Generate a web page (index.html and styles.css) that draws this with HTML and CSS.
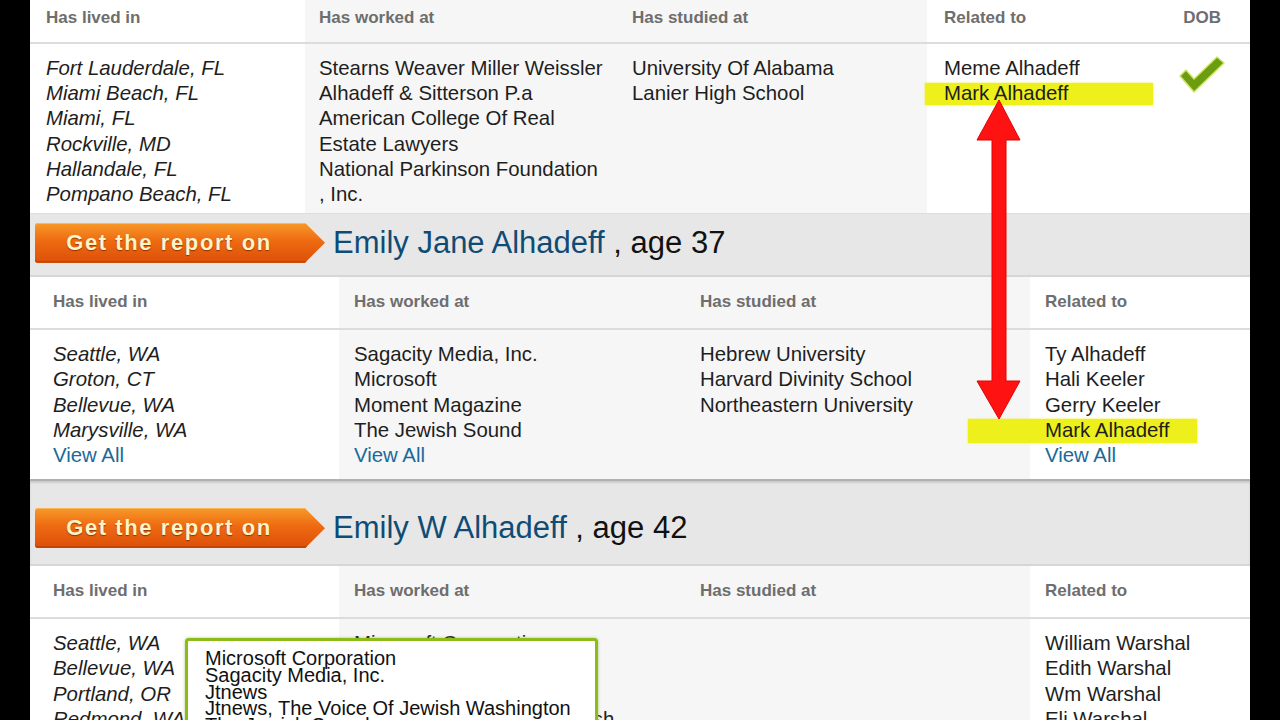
FILE: index.html
```html
<!DOCTYPE html>
<html>
    <head>
        <meta charset="utf-8">
        <title>Search results</title>
        <link rel="stylesheet" href="styles.css">
    </head>
    <body>
        <div class="page">
            <!-- first person, top cut off -->
            <div class="result">
                <div class="grid grid-top">
                    <div class="head lived">Has lived in</div>
                    <div class="head worked">Has worked at</div>
                    <div class="head studied">Has studied at</div>
                    <div class="head related">Related to</div>
                    <div class="head dob">DOB</div>
                    <div class="cell lived places">
                        <div>Fort Lauderdale, FL</div>
                        <div>Miami Beach, FL</div>
                        <div>Miami, FL</div>
                        <div>Rockville, MD</div>
                        <div>Hallandale, FL</div>
                        <div>Pompano Beach, FL</div>
                    </div>
                    <div class="cell worked">
                        <div>Stearns Weaver Miller Weissler</div>
                        <div>Alhadeff &amp; Sitterson P.a</div>
                        <div>American College Of Real<br>Estate Lawyers</div>
                        <div>National Parkinson Foundation<br>, Inc.</div>
                    </div>
                    <div class="cell studied">
                        <div>University Of Alabama</div>
                        <div>Lanier High School</div>
                    </div>
                    <div class="cell related">
                        <div>Meme Alhadeff</div>
                        <div><span class="mark mark-top">Mark Alhadeff</span></div>
                    </div>
                    <div class="cell dob">
                        <svg class="check" width="48" height="40" viewBox="0 0 48 40">
                            <polygon points="2,21 8,15 16,24 39,2 46,8 16,37" fill="#6c9c10" stroke="#cfe46a" stroke-width="1.5" stroke-linejoin="round"/>
                        </svg>
                    </div>
                </div>
            </div>

            <div class="bar">
                <a class="get-report">Get the report on</a>
                <span class="name"><a>Emily Jane Alhadeff</a> , age 37</span>
            </div>

            <div class="result">
                <div class="grid grid-main">
                    <div class="head lived">Has lived in</div>
                    <div class="head worked">Has worked at</div>
                    <div class="head studied">Has studied at</div>
                    <div class="head related">Related to</div>
                    <div class="cell lived places">
                        <div>Seattle, WA</div>
                        <div>Groton, CT</div>
                        <div>Bellevue, WA</div>
                        <div>Marysville, WA</div>
                        <a class="view-all">View All</a>
                    </div>
                    <div class="cell worked">
                        <div>Sagacity Media, Inc.</div>
                        <div>Microsoft</div>
                        <div>Moment Magazine</div>
                        <div>The Jewish Sound</div>
                        <a class="view-all">View All</a>
                    </div>
                    <div class="cell studied">
                        <div>Hebrew University</div>
                        <div>Harvard Divinity School</div>
                        <div>Northeastern University</div>
                    </div>
                    <div class="cell related">
                        <div>Ty Alhadeff</div>
                        <div>Hali Keeler</div>
                        <div>Gerry Keeler</div>
                        <div><span class="mark mark-bottom">Mark Alhadeff</span></div>
                        <a class="view-all">View All</a>
                    </div>
                </div>
            </div>

            <div class="bar bar-next">
                <a class="get-report">Get the report on</a>
                <span class="name"><a>Emily W Alhadeff</a> , age 42</span>
            </div>

            <div class="result">
                <div class="grid grid-main">
                    <div class="head lived">Has lived in</div>
                    <div class="head worked">Has worked at</div>
                    <div class="head studied">Has studied at</div>
                    <div class="head related">Related to</div>
                    <div class="cell lived places">
                        <div>Seattle, WA</div>
                        <div>Bellevue, WA</div>
                        <div>Portland, OR</div>
                        <div>Redmond, WA</div>
                    </div>
                    <div class="cell worked">
                        <div>Microsoft Corporation</div>
                        <div>Sagacity Media, Inc.</div>
                        <div>Jtnews</div>
                        <div>Jtnews, The Voice Of Jewish<br>Washington</div>
                    </div>
                    <div class="cell studied"></div>
                    <div class="cell related">
                        <div>William Warshal</div>
                        <div>Edith Warshal</div>
                        <div>Wm Warshal</div>
                        <div>Eli Warshal</div>
                    </div>
                </div>
                <!-- hover list over the employers -->
                <div class="tooltip">
                    <div>Microsoft Corporation</div>
                    <div>Sagacity Media, Inc.</div>
                    <div>Jtnews</div>
                    <div>Jtnews, The Voice Of Jewish Washington</div>
                    <div>The Jewish Sound</div>
                </div>
            </div>

            <!-- red annotation arrow -->
            <svg class="arrow" width="1220" height="720" viewBox="0 0 1220 720">
                <polygon points="969,100 990,140 976,140 976,381 990,381 969,419 947,381 962,381 962,140 947,140" fill="#ff1212" stroke="#e00000" stroke-width="1"/>
            </svg>
        </div>
    </body>
</html>
```

FILE: styles.css
```css
*{
    margin:0;
    padding:0;
    box-sizing:border-box;
}
html,body{
    height:100%;
}
body{
    background-color:#000;
    overflow:hidden;
    font-family:"Liberation Sans", Arial, Helvetica, sans-serif;
    color:#1e1e1e;
}
.page{
    width:1220px;
    margin-left:30px;
    position:relative;
}
.result{
    position:relative;
    background-color:#fff;
}
.grid{
    display:grid;
}
.grid-top{
    grid-template-columns:275px 312px 310px 238px 85px;
}
.grid-main{
    grid-template-columns:309px 345px 346px 220px;
}
.head{
    font-size:17px;
    font-weight:bold;
    line-height:20px;
    color:#6e6e6e;
    border-bottom:2px solid #dcdcdc;
}
.grid-top .head{
    padding-top:8px;
    height:44px;
}
.grid-main .head{
    padding-top:15px;
    height:53px;
}
.cell{
    font-size:20.4px;
    line-height:25.2px;
    padding-top:12px;
}
.grid-top .cell{
    padding-bottom:6px;
}
.grid-main .cell{
    padding-bottom:11px;
}
.worked,
.studied{
    background-color:#f6f6f6;
}
.places{
    font-style:italic;
}
.view-all{
    display:block;
    font-style:normal;
    color:#1b6a99;
}
.grid-top .lived{ padding-left:16px; }
.grid-top .worked{ padding-left:14px; }
.grid-top .studied{ padding-left:15px; }
.grid-top .related{ padding-left:17px; }
.grid-top .dob{
    text-align:right;
    padding-right:29px;
}
.grid-top .cell.dob{
    padding-top:0;
}
.check{
    display:block;
    margin:11px 0 0 13px;
}
.grid-main .lived{ padding-left:23px; }
.grid-main .worked{ padding-left:15px; }
.grid-main .studied{ padding-left:16px; }
.grid-main .related{ padding-left:15px; }

/* yellow marker behind the name */
.mark{
    position:relative;
    z-index:0;
}
.mark:before{
    content:"";
    position:absolute;
    z-index:-1;
    background-color:#eef01c;
    box-shadow:0 0 2px #eef01c;
}
.mark-top:before{
    left:-19px;
    top:1px;
    width:228px;
    height:22px;
}
.mark-bottom:before{
    left:-77px;
    top:0;
    width:229px;
    height:24px;
}

.bar{
    display:flex;
    align-items:center;
    height:64px;
    padding:0 0 4px 5px;
    background-color:#e7e7e7;
    border-top:1px solid #dedede;
    border-bottom:2px solid #d6d6d6;
}
.bar-next{
    height:87px;
    padding-top:27px;
    padding-bottom:16px;
    border-top:2px solid #b0b0b0;
    box-shadow:inset 0 2px 2px rgba(0,0,0,.12);
}
.get-report{
    display:block;
    width:290px;
    height:40px;
    line-height:40px;
    padding-right:22px;
    text-align:center;
    font-size:22px;
    font-weight:bold;
    letter-spacing:1.6px;
    color:#fff3c8;
    text-shadow:0 1px 1px rgba(110,30,0,.7);
    background:linear-gradient(#f89a28, #ee6a12 45%, #dc4f08);
    clip-path:polygon(0 0, 270px 0, 100% 50%, 270px 100%, 0 100%);
    border-radius:3px 0 0 3px;
    box-shadow:inset 0 -2px 0 #c44406, inset 0 1px 0 #fbb860;
}
.name{
    margin-left:8px;
    font-size:31px;
    color:#111;
    white-space:nowrap;
}
.name a{
    color:#0f4c75;
}

.tooltip{
    position:absolute;
    left:155px;
    top:72px;
    width:413px;
    height:130px;
    padding:9px 0 0 17px;
    background-color:#fff;
    border:3px solid #8dbb1a;
    border-radius:4px;
    box-shadow:0 0 3px rgba(120,160,20,.6);
    font-size:20px;
    line-height:16.7px;
    color:#111;
}
.arrow{
    position:absolute;
    left:0;
    top:0;
    pointer-events:none;
}
```
